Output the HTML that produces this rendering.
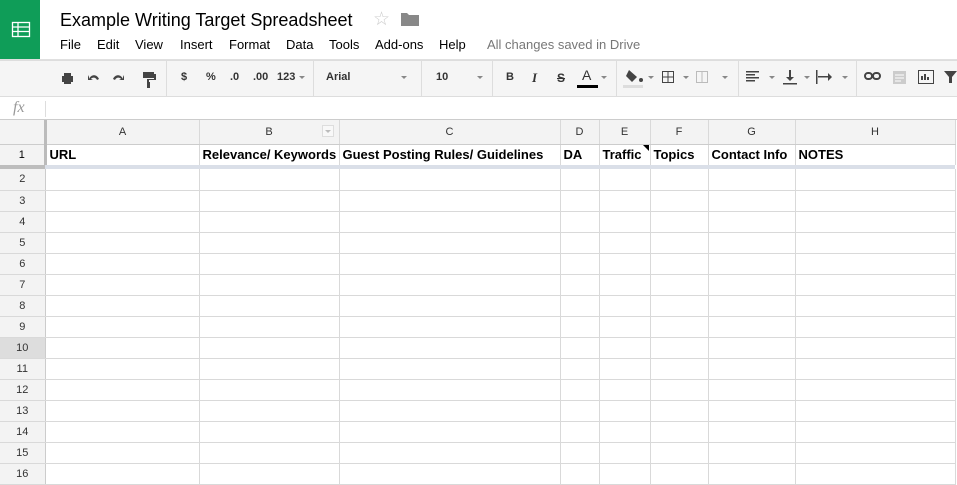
<!DOCTYPE html>
<html><head><meta charset="utf-8"><style>
*{margin:0;padding:0;box-sizing:border-box}
body{width:957px;height:467px;overflow:hidden;background:#fff;font-family:"Liberation Sans",Arial,sans-serif;position:relative}
.a{position:absolute}
.logo{left:0;top:0;width:40px;height:60px;background:#0f9d58}
.title{left:60px;top:10px;font-size:18px;color:#000}
.menu{top:37px;font-size:13px;color:#000}
.tb{left:0;top:60px;width:957px;height:37px;background:#f5f5f5;border-top:1px solid #ddd;border-bottom:1px solid #ddd}
.sep{top:61px;width:1px;height:35px;background:#ddd}
.ic{top:71px;font-size:11px;color:#333;font-weight:bold}
.dd{top:76px;width:0;height:0;border-left:3px solid transparent;border-right:3px solid transparent;border-top:3px solid #888}
.fx{left:0;top:97px;width:957px;height:23px;border-bottom:1px solid #ccc}
table{position:absolute;left:0;top:120px;border-collapse:collapse;table-layout:fixed}
td{border-right:1px solid #d9d9d9;border-bottom:1px solid #d9d9d9;height:21px;font-size:13px;padding:0 0 0 3px;white-space:nowrap;overflow:hidden}
td.rh{background:#f3f3f3;color:#333;font-size:11px;text-align:center;padding:0;border-right:1px solid #ccc}
tr.h td{background:#f3f3f3;height:24px;font-size:11px;color:#333;text-align:center;padding:0;border-bottom:1px solid #ccc}
tr.r1 td{height:21px;font-weight:bold;color:#000;border-bottom:none;vertical-align:middle}
tr.fz td{height:4px;background:#dadfe8;border:none;padding:0}
tr.fz td.rh{background:#bdbdbd}
</style></head><body>
<div class="a logo"><svg width="40" height="60"><g fill="none" stroke="#fff" stroke-width="1.3"><rect x="12.5" y="22.5" width="17" height="14"/><line x1="12.5" y1="27" x2="29.5" y2="27"/><line x1="12.5" y1="31.5" x2="29.5" y2="31.5"/><line x1="18" y1="22.5" x2="18" y2="36.5"/></g></svg></div>
<div class="a title">Example Writing Target Spreadsheet</div>
<div class="a" style="left:373px;top:8px;font-size:19px;color:#ccc">☆</div>
<svg class="a" style="left:401px;top:12px" width="18" height="14"><path d="M0 1h6l2 2h10v11H0z" fill="#888"/></svg>
<div class="a menu" style="left:60px">File</div>
<div class="a menu" style="left:97px">Edit</div>
<div class="a menu" style="left:135px">View</div>
<div class="a menu" style="left:180px">Insert</div>
<div class="a menu" style="left:229px">Format</div>
<div class="a menu" style="left:286px">Data</div>
<div class="a menu" style="left:329px">Tools</div>
<div class="a menu" style="left:375px">Add-ons</div>
<div class="a menu" style="left:439px">Help</div>
<div class="a menu" style="left:487px;color:#777">All changes saved in Drive</div>
<div class="a" style="left:0;top:59px;width:957px;height:1px;background:#e0e0e0"></div>
<div class="a tb"></div>
<svg class="a" style="left:60px;top:68px" width="110" height="20" fill="#444">
<path d="M4 5h7v3H4z M2 8h11v6h-2v-2H4v2H2z M4 12h7v4H4z"/>
<path d="M29 11c2-5 8-5 10 0l-2 1c-1-3-5-3-6-1l2 1h-5V7l1 2z"/>
<path d="M63 11c-2-5-8-5-10 0l2 1c1-3 5-3 6-1l-2 1h5V7l-1 2z"/>
<path d="M83 4h11v6H83z M94 6h2v6h-7v2h-2v-3h7z M87 14h3v6h-3z"/>
</svg>
<div class="a sep" style="left:166px"></div>
<div class="a ic" style="left:181px">$</div>
<div class="a ic" style="left:206px">%</div>
<div class="a ic" style="left:230px">.0</div>
<div class="a ic" style="left:253px">.00</div>
<div class="a ic" style="left:277px">123</div>
<div class="a dd" style="left:299px"></div>
<div class="a sep" style="left:313px"></div>
<div class="a ic" style="left:326px">Arial</div>
<div class="a dd" style="left:401px"></div>
<div class="a sep" style="left:421px"></div>
<div class="a ic" style="left:436px">10</div>
<div class="a dd" style="left:477px"></div>
<div class="a sep" style="left:492px"></div>
<div class="a ic" style="left:506px">B</div>
<div class="a ic" style="left:532px;font-style:italic;font-family:'Liberation Serif',serif;font-size:13px;top:70px">I</div>
<div class="a ic" style="left:557px;text-decoration:line-through;font-size:12px">S</div>
<div class="a ic" style="left:582px;font-weight:normal;font-size:14px;top:67px">A</div>
<div class="a" style="left:577px;top:85px;width:21px;height:3px;background:#000"></div>
<div class="a dd" style="left:601px"></div>
<div class="a sep" style="left:616px"></div>
<svg class="a" style="left:622px;top:68px" width="24" height="22"><path d="M7 2l8 7-5 5-6-6z" fill="#444"/><circle cx="19" cy="12" r="2" fill="#444"/><rect x="1" y="17" width="20" height="3" fill="#ddd"/></svg>
<div class="a dd" style="left:648px"></div>
<svg class="a" style="left:661px;top:70px" width="14" height="14" fill="none" stroke="#444"><rect x="1.5" y="1.5" width="11" height="11"/><path d="M7 1v12M1 7h12"/></svg>
<div class="a dd" style="left:683px"></div>
<svg class="a" style="left:695px;top:70px" width="14" height="14" fill="none" stroke="#bbb"><rect x="1.5" y="1.5" width="11" height="11"/><path d="M7 1v12"/></svg>
<div class="a dd" style="left:722px"></div>
<div class="a sep" style="left:738px"></div>
<svg class="a" style="left:746px;top:71px" width="14" height="12" fill="#444"><rect y="0" width="13" height="1.5"/><rect y="3" width="9" height="1.5"/><rect y="6" width="13" height="1.5"/><rect y="9" width="9" height="1.5"/></svg>
<div class="a dd" style="left:769px"></div>
<svg class="a" style="left:783px;top:69px" width="14" height="16" fill="#444"><rect x="6" y="1" width="2" height="9"/><path d="M3 8h8l-4 4z"/><rect x="0" y="14" width="14" height="1.5"/></svg>
<div class="a dd" style="left:804px"></div>
<svg class="a" style="left:815px;top:69px" width="20" height="16" fill="#444"><rect x="1" y="1" width="1.5" height="14"/><rect x="3" y="7" width="12" height="1.5"/><path d="M13 4l4 4-4 4z"/></svg>
<div class="a dd" style="left:842px"></div>
<div class="a sep" style="left:856px"></div>
<svg class="a" style="left:864px;top:71px" width="18" height="12" fill="none" stroke="#444" stroke-width="2"><rect x="1" y="2" width="7" height="6" rx="3"/><rect x="9" y="2" width="7" height="6" rx="3"/></svg>
<svg class="a" style="left:891px;top:69px" width="16" height="16"><rect x="2" y="2" width="13" height="13" fill="#ccc"/><path d="M4 6h9M4 9h9M4 12h6" stroke="#fff"/></svg>
<svg class="a" style="left:916px;top:68px" width="20" height="18" fill="none" stroke="#444"><rect x="2.5" y="2.5" width="15" height="13"/><path d="M6 12V8M9 12V6M12 12V9" stroke-width="2"/></svg>
<svg class="a" style="left:944px;top:70px" width="13" height="14" fill="#444"><path d="M0 1h13L8 7v6H5V7z"/></svg>
<div class="a fx"></div>
<div class="a" style="left:13px;top:99px;font-family:'Liberation Serif',serif;font-style:italic;font-size:16px;color:#999">fx</div>
<div class="a" style="left:45px;top:101px;width:1px;height:16px;background:#ddd"></div>
<table>
<colgroup><col style="width:45px"><col style="width:154px"><col style="width:140px"><col style="width:221px"><col style="width:39px"><col style="width:51px"><col style="width:58px"><col style="width:87px"><col style="width:160px"></colgroup>
<tr class="h"><td class="rh" style="border-right:3px solid #bbb"></td><td>A</td><td>B</td><td>C</td><td>D</td><td>E</td><td>F</td><td>G</td><td>H</td></tr>
<tr class="r1"><td class="rh" style="font-weight:normal;border-right:3px solid #bbb">1</td><td>URL</td><td>Relevance/ Keywords</td><td>Guest Posting Rules/ Guidelines</td><td>DA</td><td>Traffic</td><td>Topics</td><td>Contact Info</td><td>NOTES</td></tr>
<tr class="fz"><td class="rh"></td><td></td><td></td><td></td><td></td><td></td><td></td><td></td><td></td></tr>
<tr><td class="rh">2</td><td></td><td></td><td></td><td></td><td></td><td></td><td></td><td></td></tr>
<tr><td class="rh">3</td><td></td><td></td><td></td><td></td><td></td><td></td><td></td><td></td></tr>
<tr><td class="rh">4</td><td></td><td></td><td></td><td></td><td></td><td></td><td></td><td></td></tr>
<tr><td class="rh">5</td><td></td><td></td><td></td><td></td><td></td><td></td><td></td><td></td></tr>
<tr><td class="rh">6</td><td></td><td></td><td></td><td></td><td></td><td></td><td></td><td></td></tr>
<tr><td class="rh">7</td><td></td><td></td><td></td><td></td><td></td><td></td><td></td><td></td></tr>
<tr><td class="rh">8</td><td></td><td></td><td></td><td></td><td></td><td></td><td></td><td></td></tr>
<tr><td class="rh">9</td><td></td><td></td><td></td><td></td><td></td><td></td><td></td><td></td></tr>
<tr><td class="rh" style="background:#ddd">10</td><td></td><td></td><td></td><td></td><td></td><td></td><td></td><td></td></tr>
<tr><td class="rh">11</td><td></td><td></td><td></td><td></td><td></td><td></td><td></td><td></td></tr>
<tr><td class="rh">12</td><td></td><td></td><td></td><td></td><td></td><td></td><td></td><td></td></tr>
<tr><td class="rh">13</td><td></td><td></td><td></td><td></td><td></td><td></td><td></td><td></td></tr>
<tr><td class="rh">14</td><td></td><td></td><td></td><td></td><td></td><td></td><td></td><td></td></tr>
<tr><td class="rh">15</td><td></td><td></td><td></td><td></td><td></td><td></td><td></td><td></td></tr>
<tr><td class="rh">16</td><td></td><td></td><td></td><td></td><td></td><td></td><td></td><td></td></tr>
</table>
<div class="a" style="left:322px;top:125px;width:12px;height:12px;border:1px solid #ddd;background:#f8f8f8"></div>
<div class="a dd" style="left:325px;top:130px;border-top-color:#bbb"></div>
<div class="a" style="left:643px;top:145px;width:0;height:0;border-left:6px solid transparent;border-top:6px solid #000"></div>
</body></html>
